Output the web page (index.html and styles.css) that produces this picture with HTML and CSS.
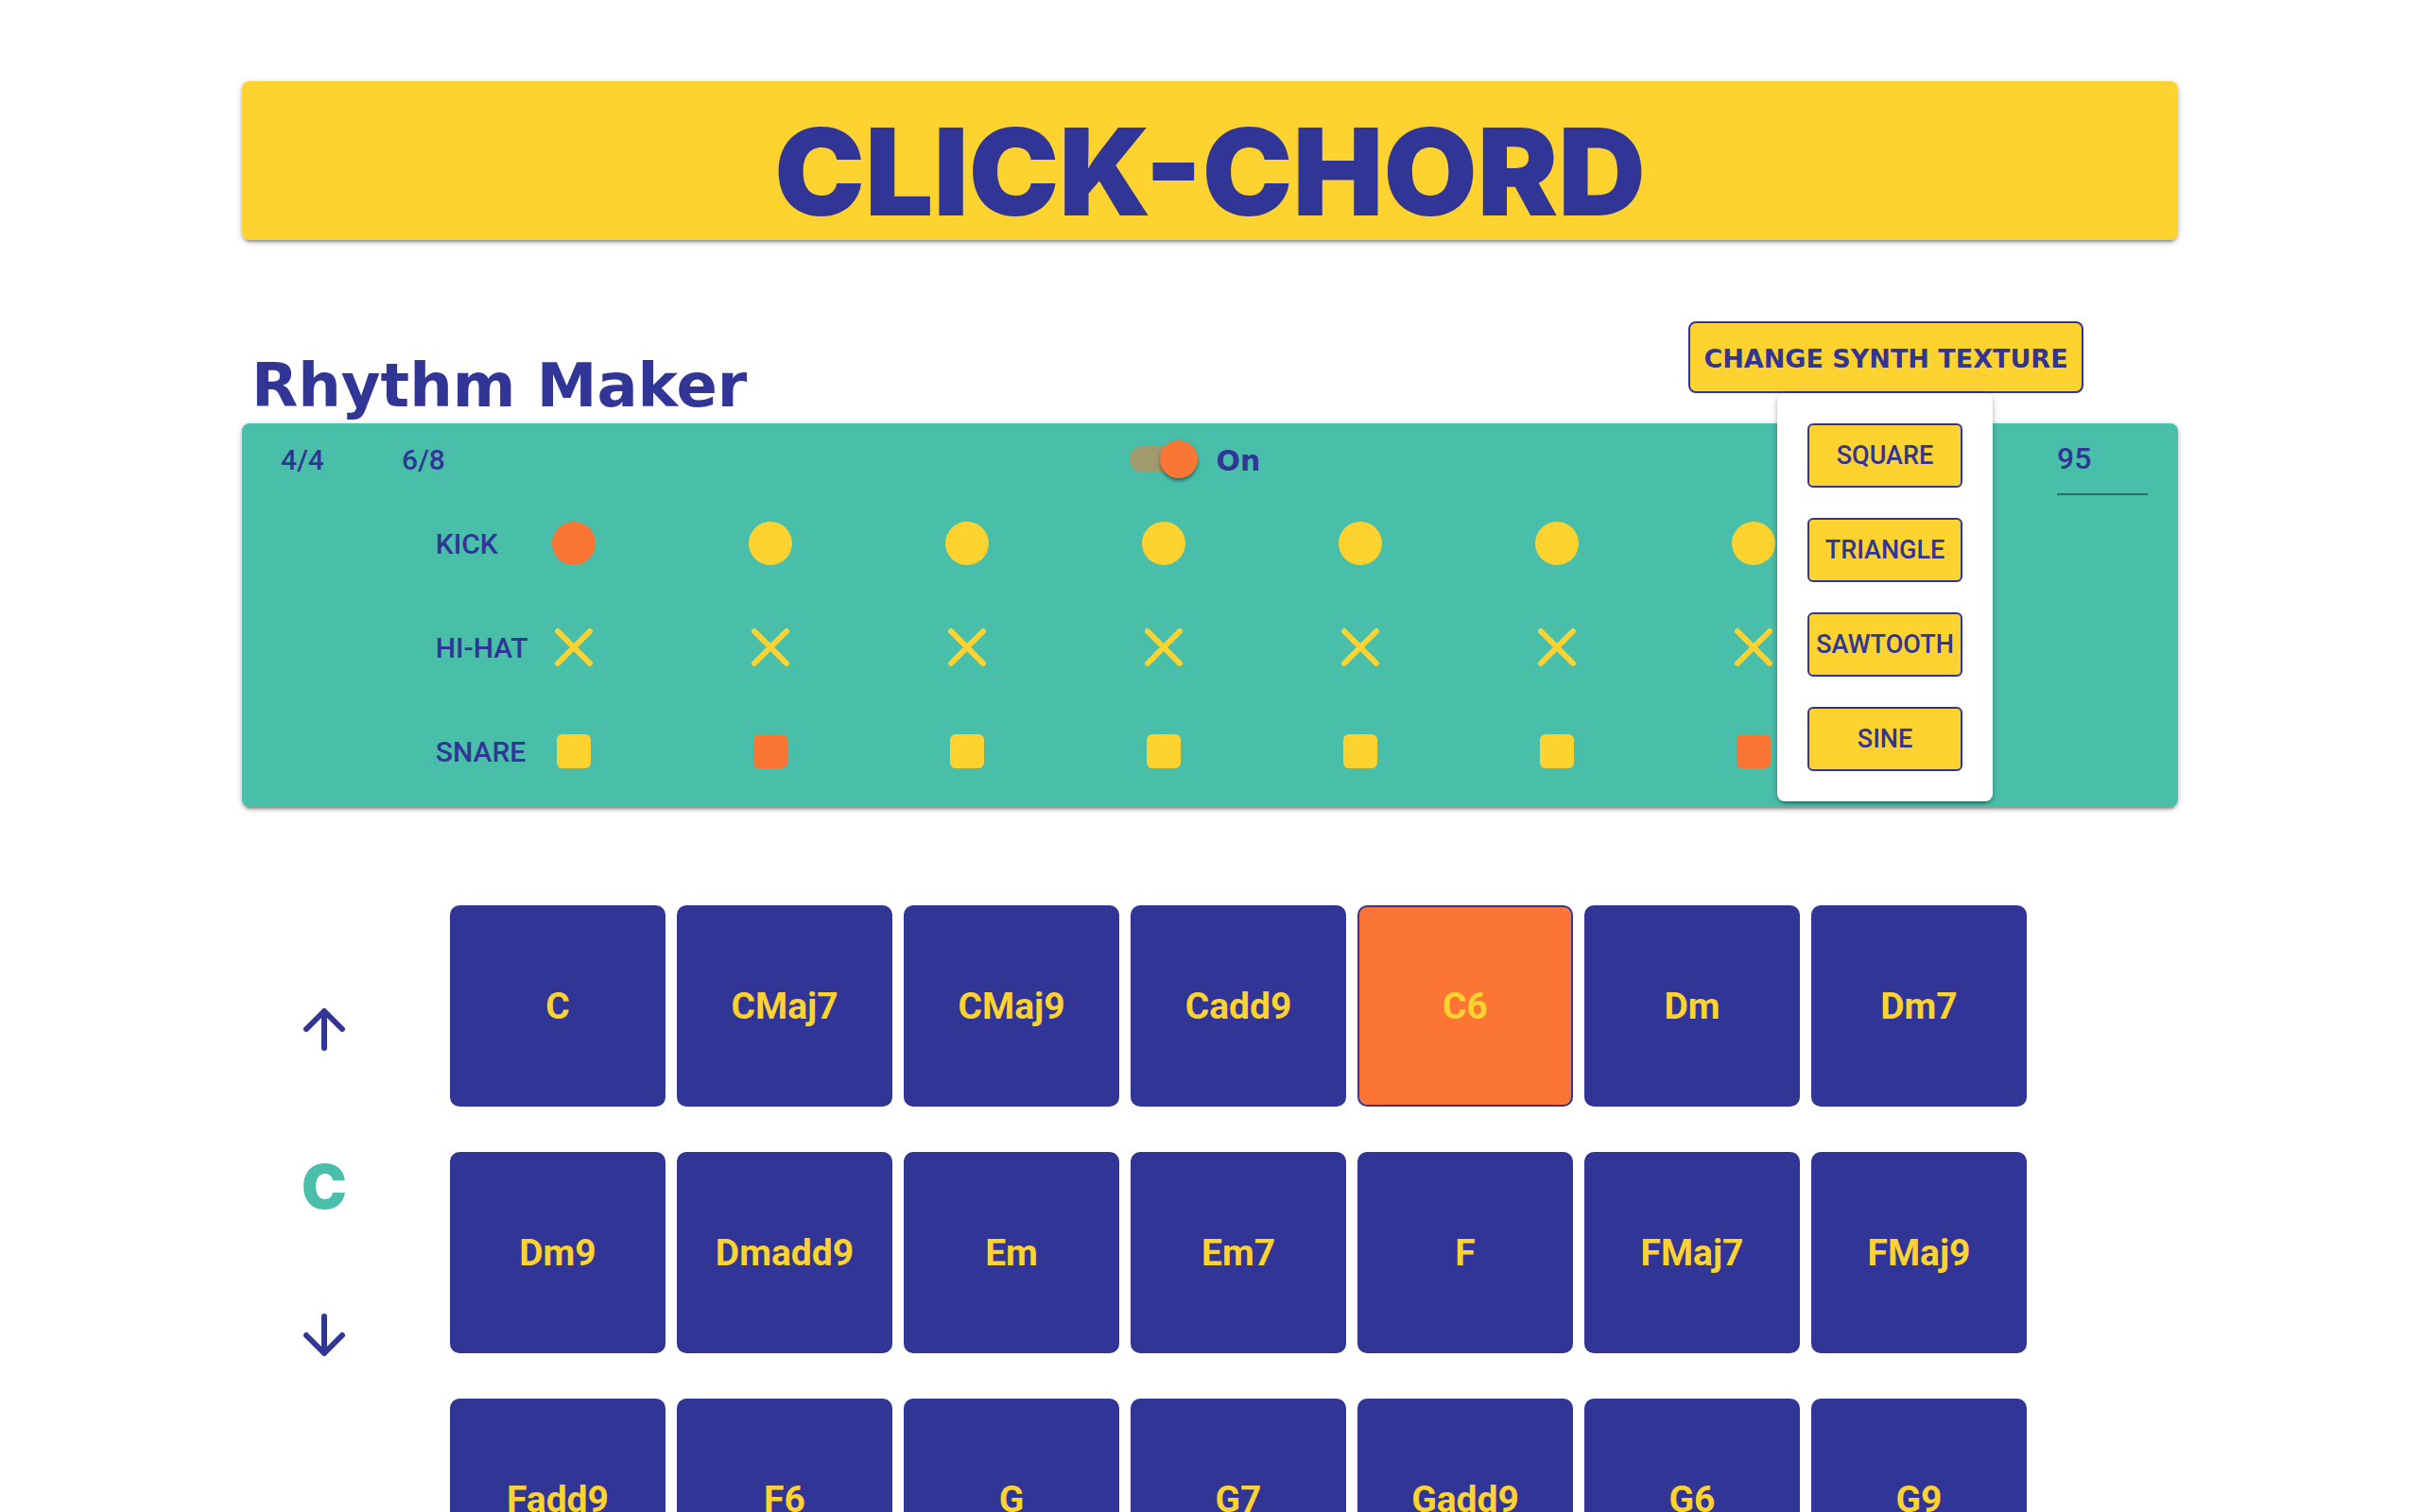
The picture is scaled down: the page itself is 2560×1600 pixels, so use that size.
FILE: index.html
```html
<!DOCTYPE html>
<html lang="en">
<head>
<meta charset="utf-8">
<meta name="viewport" content="width=device-width, initial-scale=1">
<title>Click-Chord</title>
<link rel="stylesheet" href="styles.css">
</head>
<body>
<main class="page">
  <header class="banner"><h1 class="banner-title">CLICK-CHORD</h1></header>

  <div class="toolbar">
    <h2 class="toolbar-title">Rhythm Maker</h2>
    <div class="texture">
      <button class="texture-toggle" type="button" aria-expanded="true">CHANGE SYNTH TEXTURE</button>
      <div class="texture-menu">
        <button class="texture-option" type="button">SQUARE</button>
        <button class="texture-option" type="button">TRIANGLE</button>
        <button class="texture-option" type="button">SAWTOOTH</button>
        <button class="texture-option" type="button">SINE</button>
      </div>
    </div>
  </div>

  <section class="rhythm">
    <div class="controls">
      <div class="meters">
        <button class="meter" type="button">4/4</button>
        <button class="meter" type="button">6/8</button>
      </div>
      <label class="power"><input class="switch" type="checkbox" role="switch" checked><span>On</span></label>
      <input class="tempo" type="text" inputmode="numeric" value="95" aria-label="Tempo">
    </div>
    <div class="sequencer" id="sequencer"></div>
  </section>

  <section class="chords">
    <div class="keys">
      <button class="shift" type="button" aria-label="Key up"><svg width="44" height="46" viewBox="0 0 44 46"><path d="M22 43V4M3 23L22 4L41 23"/></svg></button>
      <span class="key-name">C</span>
      <button class="shift" type="button" aria-label="Key down"><svg width="44" height="46" viewBox="0 0 44 46"><path d="M22 3V42M3 23L22 42L41 23"/></svg></button>
    </div>
    <div class="pads" id="pads"></div>
  </section>
</main>
<script src="app.js"></script>
</body>
</html>
```
FILE: styles.css
```css
:root {
  --yellow: #ffd32f;
  --indigo: #303596;
  --teal: #49bfaa;
  --orange: #fb7634;
  --shadow: 0 6px 2px -4px rgba(0, 0, 0, .2), 0 2px 4px rgba(0, 0, 0, .24), 0 2px 10px rgba(0, 0, 0, .12);
  --display: Inter, "Open Sans", sans-serif;
  --wide: "DejaVu Sans", Verdana, sans-serif;
}

* { box-sizing: border-box; }

body {
  margin: 0;
  background: #fff;
  color: var(--indigo);
  font-family: Roboto, "Liberation Sans", sans-serif;
  font-weight: 500;
}

html { scrollbar-width: none; }

button, input { font: inherit; color: inherit; }

button {
  padding: 0;
  border: 0;
  background: none;
  cursor: pointer;
}

svg { display: block; }

.page { margin: 0 10%; padding-top: 86px; }

.banner {
  padding: 24px 0 0;
  border-radius: 8px;
  background: var(--yellow);
  box-shadow: var(--shadow);
}

.banner-title {
  margin: 0;
  font: 900 128px/144px var(--display);
  text-align: center;
}

.toolbar {
  display: flex;
  justify-content: space-between;
  margin-top: 86px;
  padding: 0 100px 0 10px;
  height: 108px;
}

.toolbar-title {
  margin: 0;
  padding-top: 30px;
  font: 700 64px/76px var(--wide);
}

.texture { position: relative; }

.texture-toggle {
  width: 418px;
  height: 76px;
  padding-top: 4px;
  border: 2px solid var(--indigo);
  border-radius: 8px;
  background: var(--yellow);
  font: 700 27px/32px var(--wide);
}

.texture-menu {
  position: absolute;
  z-index: 1;
  top: 76px;
  left: 50%;
  display: flex;
  flex-direction: column;
  gap: 32px;
  width: 228px;
  margin-left: -115px;
  padding: 32px;
  border-radius: 8px;
  background: #fff;
  box-shadow: var(--shadow);
}

.texture-option {
  height: 68px;
  border: 2px solid var(--indigo);
  border-radius: 6px;
  background: var(--yellow);
  font-size: 27px;
}

.rhythm {
  padding-bottom: 4px;
  border-radius: 8px;
  background: var(--teal);
  box-shadow: var(--shadow);
}

.controls {
  display: grid;
  grid-template-columns: 1fr auto 1fr;
  height: 72px;
  padding: 0 32px 0 40px;
}

.meters { display: flex; gap: 80px; height: 76px; }

.meter { width: 48px; font-size: 30px; }

.power {
  display: flex;
  align-items: center;
  gap: 20px;
  height: 76px;
  margin-right: 40px;
  font: 700 30px/40px var(--wide);
}

.power span { padding-top: 4px; }

.switch {
  appearance: none;
  position: relative;
  width: 72px;
  height: 28px;
  margin: 0;
  border-radius: 14px;
  background: rgba(251, 118, 52, .5);
}

.switch::after {
  content: "";
  position: absolute;
  top: -6px;
  right: 0;
  width: 40px;
  height: 40px;
  border-radius: 50%;
  background: var(--orange);
  box-shadow: 0 3px 3px rgba(0, 0, 0, .3), 0 2px 6px rgba(0, 0, 0, .15);
}

.tempo {
  justify-self: end;
  width: 96px;
  height: 76px;
  padding: 0;
  border: 0;
  border-bottom: 2px solid rgba(0, 0, 0, .42);
  background: none;
  font-size: 32px;
}

.sequencer { margin: 0 56px 0 10%; }

.track {
  display: grid;
  grid-template-columns: 123px repeat(8, 1fr);
  align-items: center;
  height: 110px;
  font-size: 30px;
}

.step { width: 46px; height: 46px; color: var(--yellow); }
.step.is-on { color: var(--orange); }

.chords {
  display: grid;
  grid-template-columns: 174px 1fr;
  gap: 46px;
  margin-top: 104px;
  padding-right: 160px;
}

.keys {
  display: flex;
  flex-direction: column;
  align-items: center;
  padding-top: 108px;
}

.shift { width: 44px; height: 46px; }

.shift path {
  fill: none;
  stroke: var(--indigo);
  stroke-width: 6;
  stroke-linecap: round;
  stroke-linejoin: round;
}

.key-name {
  padding: 106px 0 96px;
  color: var(--teal);
  font: 900 64px/76px var(--display);
}

.pads {
  display: grid;
  grid-template-columns: repeat(7, 1fr);
  gap: 48px 12px;
}

.pad {
  height: 213px;
  border: 2px solid var(--indigo);
  border-radius: 10px;
  background: var(--indigo);
  color: var(--yellow);
  font-size: 39px;
  font-weight: 700;
}

.pad.is-on { background: var(--orange); }
```
FILE: app.js
```js
const shapes = {
  circle: '<circle cx="23" cy="23" r="23" fill="currentColor"/>',
  cross: '<path d="M6 6L40 40M40 6L6 40" stroke="currentColor" stroke-width="6" stroke-linecap="round"/>',
  square: '<rect x="5" y="5" width="36" height="36" rx="6" fill="currentColor"/>'
};

const tracks = [
  { name: 'KICK', shape: 'circle', on: [0] },
  { name: 'HI-HAT', shape: 'cross', on: [] },
  { name: 'SNARE', shape: 'square', on: [1, 6] }
];

document.getElementById('sequencer').innerHTML = tracks.map(({ name, shape, on }) => {
  const steps = Array.from({ length: 8 }, (_, i) =>
    `<button type="button" class="step${on.includes(i) ? ' is-on' : ''}" aria-label="${name} ${i + 1}">` +
    `<svg width="46" height="46" viewBox="0 0 46 46">${shapes[shape]}</svg></button>`).join('');
  return `<div class="track"><span>${name}</span>${steps}</div>`;
}).join('');

const chords = ['C', 'CMaj7', 'CMaj9', 'Cadd9', 'C6', 'Dm', 'Dm7',
  'Dm9', 'Dmadd9', 'Em', 'Em7', 'F', 'FMaj7', 'FMaj9',
  'Fadd9', 'F6', 'G', 'G7', 'Gadd9', 'G6', 'G9'];

document.getElementById('pads').innerHTML = chords.map(chord =>
  `<button type="button" class="pad${chord === 'C6' ? ' is-on' : ''}">${chord}</button>`).join('');
```
